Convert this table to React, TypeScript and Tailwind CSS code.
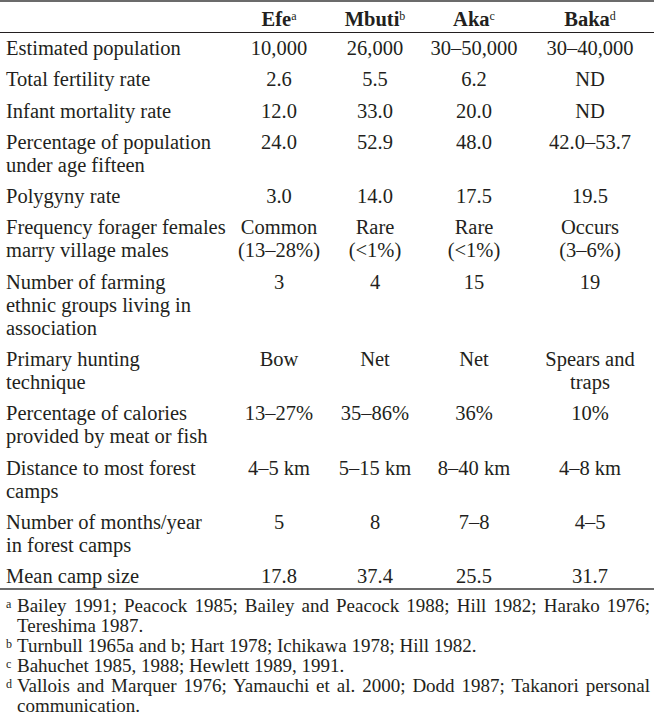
import React from 'react';

type Row = { label: string[]; values: string[][] };

const rows: Row[] = [
  { label: ['Estimated population'], values: [['10,000'], ['26,000'], ['30–50,000'], ['30–40,000']] },
  { label: ['Total fertility rate'], values: [['2.6'], ['5.5'], ['6.2'], ['ND']] },
  { label: ['Infant mortality rate'], values: [['12.0'], ['33.0'], ['20.0'], ['ND']] },
  { label: ['Percentage of population', 'under age fifteen'], values: [['24.0'], ['52.9'], ['48.0'], ['42.0–53.7']] },
  { label: ['Polygyny rate'], values: [['3.0'], ['14.0'], ['17.5'], ['19.5']] },
  {
    label: ['Frequency forager females', 'marry village males'],
    values: [['Common', '(13–28%)'], ['Rare', '(<1%)'], ['Rare', '(<1%)'], ['Occurs', '(3–6%)']],
  },
  { label: ['Number of farming', 'ethnic groups living in', 'association'], values: [['3'], ['4'], ['15'], ['19']] },
  { label: ['Primary hunting', 'technique'], values: [['Bow'], ['Net'], ['Net'], ['Spears and', 'traps']] },
  { label: ['Percentage of calories', 'provided by meat or fish'], values: [['13–27%'], ['35–86%'], ['36%'], ['10%']] },
  { label: ['Distance to most forest', 'camps'], values: [['4–5 km'], ['5–15 km'], ['8–40 km'], ['4–8 km']] },
  { label: ['Number of months/year', 'in forest camps'], values: [['5'], ['8'], ['7–8'], ['4–5']] },
  { label: ['Mean camp size'], values: [['17.8'], ['37.4'], ['25.5'], ['31.7']] },
];

const headers = [
  { name: 'Efe', mark: 'a' },
  { name: 'Mbuti', mark: 'b' },
  { name: 'Aka', mark: 'c' },
  { name: 'Baka', mark: 'd' },
];

const notes = [
  {
    mark: 'a',
    lines: ['Bailey 1991; Peacock 1985; Bailey and Peacock 1988; Hill 1982; Harako 1976;', 'Tereshima 1987.'],
  },
  { mark: 'b', lines: ['Turnbull 1965a and b; Hart 1978; Ichikawa 1978; Hill 1982.'] },
  { mark: 'c', lines: ['Bahuchet 1985, 1988; Hewlett 1989, 1991.'] },
  {
    mark: 'd',
    lines: ['Vallois and Marquer 1976; Yamauchi et al. 2000; Dodd 1987; Takanori personal', 'communication.'],
  },
];

const gridCols = 'grid grid-cols-[230px_98px_94px_104px_128px]';

export default function App() {
  return (
    <div className="w-[657px] min-h-[718px] bg-white text-[#231f20] [font-family:'Liberation_Serif','Times_New_Roman',serif]">
      <div className="w-[654px]">
        {/* top rule */}
        <div className="h-[2px] bg-[#6b6b6b]" />

        {/* header */}
        <div className={`${gridCols} pt-[6px] pb-[1px] text-[20.5px] leading-[23px]`}>
          <div />
          {headers.map((h) => (
            <div key={h.name} className="text-center">
              <span className="font-bold">{h.name}</span>
              <sup className="text-[12px] -top-[6px]">{h.mark}</sup>
            </div>
          ))}
        </div>
        <div className="h-px bg-[#231f20]" />

        {/* body */}
        {rows.map((row, i) => (
          <div
            key={i}
            className={`${gridCols} pt-[4px] text-[20.5px] leading-[23px] ${
              i === rows.length - 1 ? 'pb-0' : 'pb-[4.3px]'
            }`}
          >
            <div className="pl-[6px]">
              {row.label.map((l, j) => (
                <div key={j}>{l}</div>
              ))}
            </div>
            {row.values.map((v, j) => (
              <div key={j} className="text-center">
                {v.map((l, k) => (
                  <div key={k}>{l}</div>
                ))}
              </div>
            ))}
          </div>
        ))}
        <div className="h-[2px] bg-[#6b6b6b]" />

        {/* footnotes */}
        <div className="mt-[6px] pl-[6px] pr-[4px] text-[19px] leading-[20px]">
          {notes.map((n) => (
            <div key={n.mark} className="flex">
              <span className="w-[11px] shrink-0 pt-[2px] text-[12px] leading-none">{n.mark}</span>
              <div className="flex-1">
                {n.lines.map((l, k) => (
                  <div
                    key={k}
                    className={k < n.lines.length - 1 ? 'text-justify [text-align-last:justify]' : ''}
                  >
                    {l}
                  </div>
                ))}
              </div>
            </div>
          ))}
        </div>
      </div>
    </div>
  );
}
